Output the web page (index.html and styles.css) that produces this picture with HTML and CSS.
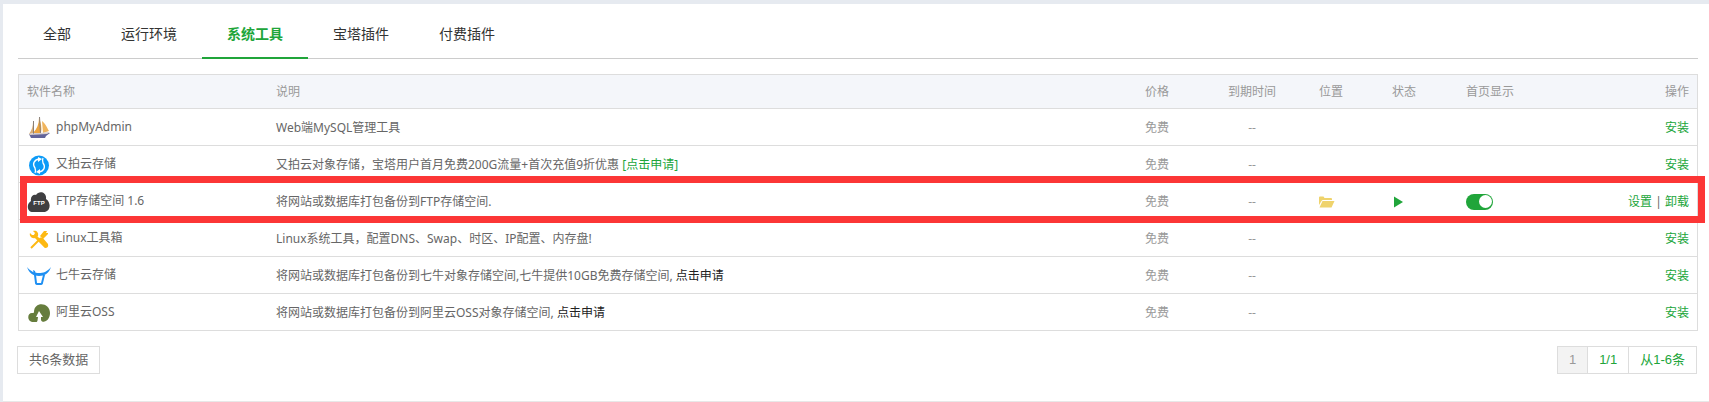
FILE: index.html
```html
<!DOCTYPE html>
<html lang="zh-CN">
<head>
<meta charset="utf-8">
<title>软件管理</title>
<link rel="stylesheet" href="styles.css">
</head>
<body>
<main class="panel">
  <nav class="tabs">
    <button type="button" class="tab">全部</button>
    <button type="button" class="tab">运行环境</button>
    <button type="button" class="tab active">系统工具</button>
    <button type="button" class="tab">宝塔插件</button>
    <button type="button" class="tab">付费插件</button>
  </nav>
  <table class="soft">
    <colgroup>
      <col class="c-name"><col><col class="c-price"><col class="c-expiry"><col class="c-place"><col class="c-state"><col class="c-ops">
      <col class="c-act">
    </colgroup>
    <thead>
      <tr><th>软件名称</th><th>说明</th><th>价格</th><th class="center">到期时间</th><th>位置</th><th>状态</th><th>首页显示</th><th class="right">操作</th></tr>
    </thead>
    <tbody>
      <tr>
        <td><div class="name"><svg class="icon" viewBox="0 0 24 24"><path fill="#eda53f" d="M12 2C14 7 15 12 14 17H6C10 13 12 8 12 2Z"/><path fill="#f0b45c" d="M15 5C19 8 20 12 22 15L16 17Z"/><path fill="#d9ae77" d="M6 6 6 17 2 18C5 14 6 10 6 6Z"/><path fill="#8a8078" d="M12 1h1l1 16h-1zM6 5h1v13H6z"/><path fill="#62649a" d="M2 18 23 17 19 20 18 22H4Z"/><path fill="#d9cfcc" d="M2 18 23 16 20 18 3 19Z"/></svg><span>phpMyAdmin</span></div></td>
        <td>Web端MySQL管理工具</td><td class="mute">免费</td><td class="mute center">--</td><td></td><td></td><td></td><td class="right"><a href="#">安装</a></td>
      </tr>
      <tr>
        <td><div class="name"><svg class="icon" viewBox="0 0 24 24"><circle cx="12" cy="12.500" r="10" fill="#0d9bf7"/><g fill="none" stroke="#fff" stroke-width="1.300"><path d="M12 6C7 7 5 11 8 15Q9 18 8 20"/><path d="M12 19C17 18 19 14 16 10Q15 7 16 5"/></g><path fill="#fff" d="m11 4 4 2-4 3ZM13 21l-4-2 4-3Z"/></svg><span>又拍云存储</span></div></td>
        <td>又拍云对象存储，宝塔用户首月免费200G流量+首次充值9折优惠 <a href="#">[点击申请]</a></td><td class="mute">免费</td><td class="mute center">--</td><td></td><td></td><td></td><td class="right"><a href="#">安装</a></td>
      </tr>
      <tr class="marked">
        <td><div class="name"><svg class="icon" viewBox="0 0 24 24"><path fill="#3f3f41" d="M6 22C0 22-1 14 4 11 3 6 7 4 9 5 12 0 20 2 19 9 24 12 24 21 18 22Z"/><text class="ftp" x="12" y="15" text-anchor="middle">FTP</text></svg><span>FTP存储空间 1.6</span></div></td>
        <td>将网站或数据库打包备份到FTP存储空间.</td><td class="mute">免费</td><td class="mute center">--</td>
        <td><button type="button" class="glyph" aria-label="打开目录"><svg width="16" height="12" viewBox="0 0 16 12"><path fill="#efd36c" d="M0 9V1.500Q0 .5 1 .5h3.500l1 1.500H12q1 0 1 1v1H4Q3 4 2.500 5ZM.5 11.500 3.500 5H15.500L12.500 11.500Z"/></svg></button></td>
        <td><button type="button" class="glyph" aria-label="运行中"><svg width="12" height="12" viewBox="0 0 12 12"><path fill="#20a53a" d="M2 .5v11l9-5.500Z"/></svg></button></td>
        <td><input type="checkbox" class="toggle" aria-label="首页显示" checked></td>
        <td class="right"><a href="#">设置</a> | <a href="#">卸载</a></td>
      </tr>
      <tr>
        <td><div class="name"><svg class="icon" viewBox="0 0 24 24"><path fill="none" stroke="#fdb913" stroke-width="3" stroke-linecap="round" d="M8 9 18 19"/><path fill="#fdb913" d="M6 4 8 6 7 8 5 8 3 6C2 9 5 12 8 11L11 9C12 5 9 3 6 4Z"/><path fill="#fdb913" d="m12 13 3-3 6 7q1 4-3 4ZM17 4l3 0-1 2 2 0 0 1-5 5-3-3Z"/><path stroke="#fdb913" stroke-width="2" d="M14 11 4 21"/></svg><span>Linux工具箱</span></div></td>
        <td>Linux系统工具，配置DNS、Swap、时区、IP配置、内存盘!</td><td class="mute">免费</td><td class="mute center">--</td><td></td><td></td><td></td><td class="right"><a href="#">安装</a></td>
      </tr>
      <tr>
        <td><div class="name"><svg class="icon" viewBox="0 0 24 24"><path fill="#1e8ff2" d="M0 3C4 8 8 9 12 9S20 8 24 3C22 9 18 12 12 12S2 9 0 3Z"/><path fill="#1e8ff2" d="m6 6 2 1 1 4-2 0ZM7 11l2 0 1 8h4l2-8 2 0-2 8q0 2-3 2h-2q-3 0-3-2Z"/></svg><span>七牛云存储</span></div></td>
        <td>将网站或数据库打包备份到七牛对象存储空间,七牛提供10GB免费存储空间, <a href="#" class="dark">点击申请</a></td><td class="mute">免费</td><td class="mute center">--</td><td></td><td></td><td></td><td class="right"><a href="#">安装</a></td>
      </tr>
      <tr>
        <td><div class="name"><svg class="icon" viewBox="0 0 24 24"><path fill="#667d3d" d="M5 21C0 20 0 12 5 12 6 12 7 12 7 11 7 0 23 1 23 12 23 17 20 21 15 21Z"/><path fill="#fff" d="m12 10 4 6-2 0 0 3q0 1 2 2h-4q-2 0-3 1 2-2 2-6l-2 0Z"/></svg><span>阿里云OSS</span></div></td>
        <td>将网站或数据库打包备份到阿里云OSS对象存储空间, <a href="#" class="dark">点击申请</a></td><td class="mute">免费</td><td class="mute center">--</td><td></td><td></td><td></td><td class="right"><a href="#">安装</a></td>
      </tr>
    </tbody>
  </table>
  <footer class="footer">
    <span class="total">共6条数据</span>
    <div class="pages"><span class="current">1</span><span>1/1</span><span>从1-6条</span></div>
  </footer>
</main>
</body>
</html>
```
FILE: styles.css
```css
* { box-sizing: border-box; }
body {
  margin: 0;
  padding: 4px 0 0 3px;
  background: #e6eaf0;
  color: #666;
  font: 12px/18px "Noto Sans", "Noto Sans CJK SC", sans-serif;
}
button { font: inherit; border: 0; background: none; padding: 0; cursor: pointer; }
a { color: #20a53a; text-decoration: none; }
a.dark { color: #222; }

.panel {
  padding: 5px 11px 27px 15px;
  background: #fff;
  border-bottom: 1px solid #e8e8e8;
}
.tabs {
  display: flex;
  border-bottom: 1px solid #ccc;
}
.tab {
  height: 50px;
  margin-bottom: -1px;
  padding: 2px 25px 0;
  border-bottom: 2px solid transparent;
  color: #333;
  font-size: 14px;
  line-height: 20px;
}
.tab.active { color: #20a53a; border-color: #20a53a; font-weight: 700; }

.soft {
  width: 100%;
  margin-top: 15px;
  table-layout: fixed;
  border-collapse: separate;
  border-spacing: 0;
  border: 1px solid #ddd;
  border-bottom: 0;
}
.c-name { width: 249px; }
.c-price { width: 56px; }
.c-expiry { width: 118px; }
.c-place { width: 73px; }
.c-state { width: 74px; }
.c-ops { width: 120px; }
.c-act { width: 119px; }
th, td {
  height: 37px;
  padding: 1px 8px 0;
  border-bottom: 1px solid #ddd;
  text-align: left;
  vertical-align: middle;
  white-space: nowrap;
}
th {
  height: 34px;
  background: #f4f6fa;
  color: #999;
  font-weight: 400;
}
.mute { color: #999; }
.center { text-align: center; }
.right { text-align: right; }
.name { display: flex; align-items: center; gap: 5px; }
.name span { padding-bottom: 2px; }
.icon { width: 24px; height: 24px; flex: none; }
.ftp { font: 700 6px "Liberation Sans", sans-serif; fill: #fff; }
.glyph { display: block; }
.glyph svg { display: block; }

.toggle {
  display: flex;
  align-items: center;
  justify-content: flex-end;
  appearance: none;
  width: 27px;
  height: 16px;
  margin: 0;
  padding: 1px;
  border-radius: 8px;
  background: #20a53a;
}
.toggle::before {
  content: "";
  width: 13px;
  height: 13px;
  border-radius: 50%;
  background: #fff;
}

.marked { position: relative; }
.marked td:first-child::after {
  content: "";
  position: absolute;
  inset: -7px -8px -3px 1px;
  border: 7px solid #fc3636;
  pointer-events: none;
}

.footer {
  display: flex;
  justify-content: space-between;
  margin: 15px 1px 0 -1px;
  font: 13px/26px "Liberation Sans", "Noto Sans CJK SC", sans-serif;
}
.total { padding: 0 11px; border: 1px solid #ddd; }
.pages { display: flex; border: 1px solid #ddd; color: #20a53a; }
.pages span { padding: 0 11px; }
.pages span + span { border-left: 1px solid #ddd; }
.pages .current { background: #f3f3f3; color: #999; }
```
